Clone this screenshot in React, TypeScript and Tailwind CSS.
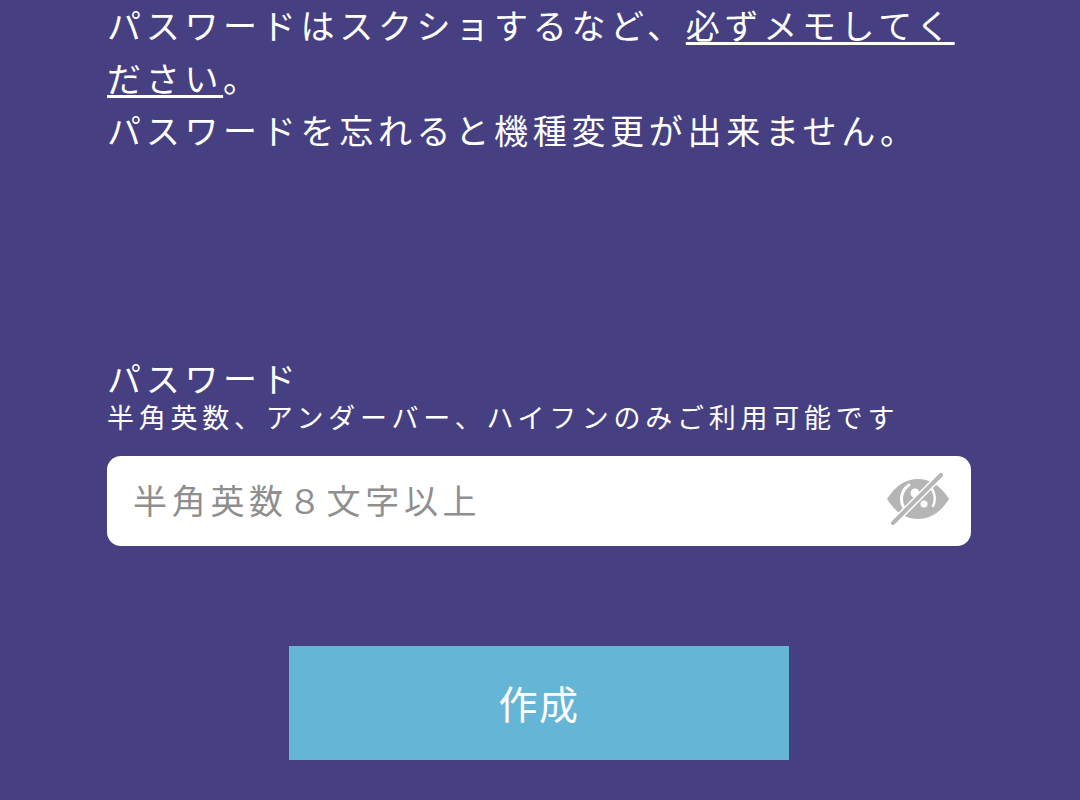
export default function App() {
  return (
    <div className="h-[800px] w-[1080px] overflow-hidden bg-[#463f82] text-white font-['Noto_Sans_CJK_JP','Noto_Sans',sans-serif] font-normal">
      <div className="flex flex-col pl-[107px] pr-[109px]">
        <p className="-mt-px text-[34px] leading-[52.5px] tracking-[4.7px]">
          パスワードはスクショするなど、<span className="underline decoration-[2.5px] underline-offset-[3px]">必ずメモしてください</span>。
          <br />
          パスワードを忘れると機種変更が出来ません。
        </p>
        <div className="mt-[201px] text-[34px] leading-[40px] tracking-[4.7px]">パスワード</div>
        <div className="mt-[1px] text-[27px] leading-[36px] tracking-[4.75px]">半角英数、アンダーバー、ハイフンのみご利用可能です</div>
        <div className="mt-[21px] flex h-[90px] items-center justify-between rounded-[14px] bg-white pl-[26px] pr-[21px]">
          <span className="-mt-[3px] text-[34px] tracking-[4.7px] text-[#8f8f8f]">半角英数８文字以上</span>
          <svg width="64" height="56" viewBox="0 0 64 56" className="shrink-0">
            <path fill="#b5b5b5" d="M1 26C10 12 20 6 32 6s22 6 31 20c-9 14-19 20-31 20S10 40 1 26Z" />
            <path fill="none" stroke="#fff" strokeWidth="3" strokeLinecap="round" d="M18 35a17 17 0 0 1 5-23" />
            <path fill="none" stroke="#fff" strokeWidth="2.5" strokeLinecap="round" d="M42 12a17 17 0 0 1 5 21" />
            <circle cx="29" cy="20" r="4.5" fill="#fff" />
            <circle cx="38" cy="31" r="3.5" fill="#fff" />
            <path d="M7 50 55 2" stroke="#fff" strokeWidth="7" />
            <path d="M7 50 55 2" stroke="#b5b5b5" strokeWidth="4" strokeLinecap="round" />
          </svg>
        </div>
        <button className="mx-auto mt-[100px] flex h-[114px] w-[500px] items-center justify-center bg-[#65b6d6] text-[39px] tracking-[1.5px] text-white">作成</button>
      </div>
    </div>
  );
}
